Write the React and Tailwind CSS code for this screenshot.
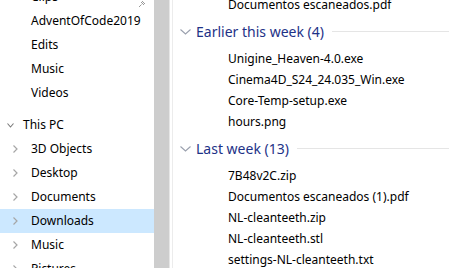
import React from "react";

const font = { fontFamily: '"Segoe UI", "Noto Sans", "Liberation Sans", sans-serif' };

function ChevronRight() {
  return (
    <svg width="5" height="8" viewBox="0 0 5 8" className="shrink-0">
      <path d="M0.5 0.5 L4 4 L0.5 7.5" fill="none" stroke="#a6a6a6" strokeWidth="1.2" />
    </svg>
  );
}

function ChevronDown({ w = 7, h = 4, color = "#8a8a8a" }) {
  return (
    <svg width={w} height={h + 1} viewBox={`0 0 ${w} ${h + 1}`} className="shrink-0">
      <path d={`M0.5 0.5 L${w / 2} ${h} L${w - 0.5} 0.5`} fill="none" stroke={color} strokeWidth="1.1" />
    </svg>
  );
}

function NavItem({ label, indent = "pl-[31px]", chevron = false, selected = false, pin = false, first = false }) {
  return (
    <div
      className={`flex items-center h-6 shrink-0 text-[12px] text-black ${first ? "-mt-[15px]" : ""} ${
        selected ? "bg-[#cce8ff]" : ""
      }`}
    >
      {chevron ? (
        <div className="flex items-center pl-[13px] gap-[13px]">
          <ChevronRight />
          <span>{label}</span>
        </div>
      ) : (
        <span className={indent}>{label}</span>
      )}
      {pin && (
        <svg width="8" height="8" viewBox="0 0 8 8" className="ml-auto mr-[8px] mt-[14px]">
          <path d="M1 7 L3.5 4.5 M3 2 L6 5 M4 1 L7 4" stroke="#9a9a9a" strokeWidth="1" fill="none" />
        </svg>
      )}
    </div>
  );
}

function FileRow({ name }) {
  return (
    <div className="h-[21px] shrink-0 flex items-center pl-[55px] text-[12px] text-black whitespace-nowrap">
      {name}
    </div>
  );
}

function GroupHeader({ title }) {
  return (
    <div className="h-[33px] shrink-0 flex items-center pl-[7px]">
      <ChevronDown w={11} h={5} color="#9aa0ae" />
      <span className="ml-[5px] text-[14px] text-[#1e3287] whitespace-nowrap">{title}</span>
      <div className="flex-1 h-px bg-[#e5e5e5] ml-[8px]" />
    </div>
  );
}

export default function App() {
  return (
    <div className="flex w-[449px] h-[268px] overflow-hidden bg-white" style={font}>
      {/* nav pane */}
      <div className="w-[154px] shrink-0 flex flex-col">
        <NavItem label="Clips" first pin />
        <NavItem label="AdventOfCode2019" />
        <NavItem label="Edits" />
        <NavItem label="Music" />
        <NavItem label="Videos" />
        <div className="h-2 shrink-0" />
        <div className="flex items-center h-6 shrink-0 text-[12px] text-black">
          <div className="pl-[7px] w-[23px]">
            <ChevronDown w={7} h={4} color="#7a7a7a" />
          </div>
          <span>This PC</span>
        </div>
        <NavItem label="3D Objects" chevron />
        <NavItem label="Desktop" chevron />
        <NavItem label="Documents" chevron />
        <NavItem label="Downloads" chevron selected />
        <NavItem label="Music" chevron />
        <NavItem label="Pictures" chevron />
      </div>

      {/* scrollbar + splitter */}
      <div className="w-[15px] shrink-0 bg-[#cdcdcd]" />
      <div className="w-px shrink-0 bg-[#e6e6e6]" />
      <div className="w-[2px] shrink-0 bg-white" />
      <div className="w-px shrink-0 bg-[#ececec]" />

      {/* file list */}
      <div className="flex-1 min-w-0 flex flex-col">
        <div className="-mt-[6px] shrink-0">
          <FileRow name="Documentos escaneados.pdf" />
        </div>
        <GroupHeader title="Earlier this week (4)" />
        <FileRow name="Unigine_Heaven-4.0.exe" />
        <FileRow name="Cinema4D_S24_24.035_Win.exe" />
        <FileRow name="Core-Temp-setup.exe" />
        <FileRow name="hours.png" />
        <GroupHeader title="Last week (13)" />
        <FileRow name="7B48v2C.zip" />
        <FileRow name="Documentos escaneados (1).pdf" />
        <FileRow name="NL-cleanteeth.zip" />
        <FileRow name="NL-cleanteeth.stl" />
        <FileRow name="settings-NL-cleanteeth.txt" />
      </div>
    </div>
  );
}
